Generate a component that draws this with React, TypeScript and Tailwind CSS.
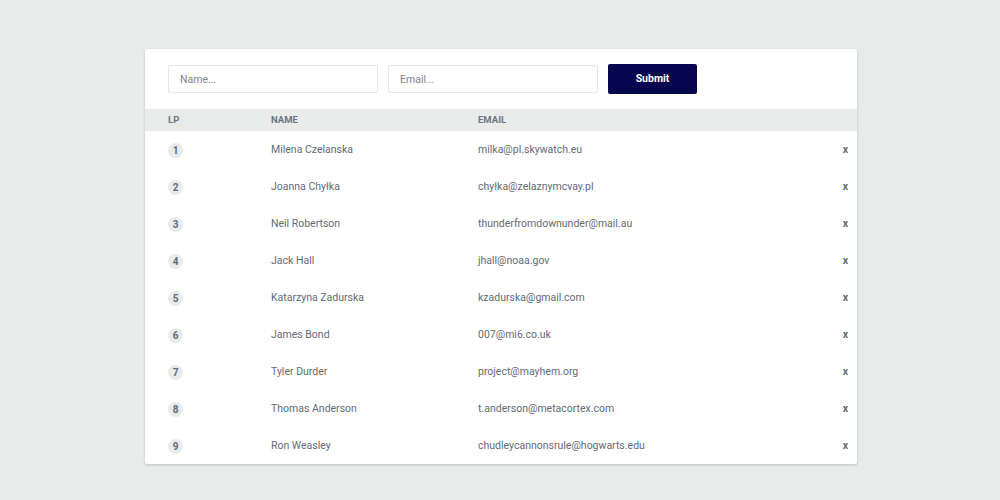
const people = [
  { name: 'Milena Czelanska', email: 'milka@pl.skywatch.eu' },
  { name: 'Joanna Chyłka', email: 'chyłka@zelaznymcvay.pl' },
  { name: 'Neil Robertson', email: 'thunderfromdownunder@mail.au' },
  { name: 'Jack Hall', email: 'jhall@noaa.gov' },
  { name: 'Katarzyna Zadurska', email: 'kzadurska@gmail.com' },
  { name: 'James Bond', email: '007@mi6.co.uk' },
  { name: 'Tyler Durder', email: 'project@mayhem.org' },
  { name: 'Thomas Anderson', email: 't.anderson@metacortex.com' },
  { name: 'Ron Weasley', email: 'chudleycannonsrule@hogwarts.edu' },
]

export default function App() {
  return (
    <div className="min-h-[500px] bg-[#e8ebea] pt-[49px] font-['Roboto',sans-serif]">
      <div className="ml-[145px] w-[712px] rounded-[2px] bg-white shadow-[0_1px_3px_rgba(0,0,0,0.18)]">
        <form className="flex items-center gap-[10px] px-[23px] pt-[15px] pb-[15px]" onSubmit={e => e.preventDefault()}>
          <input
            placeholder="Name..."
            className="h-[28px] w-[210px] rounded-[2px] border border-[#e4e7e6] px-[11px] text-[10.5px] text-[#5f6b76] placeholder:text-[#7b858e] outline-none"
          />
          <input
            placeholder="Email..."
            className="h-[28px] w-[210px] rounded-[2px] border border-[#e4e7e6] px-[11px] text-[10.5px] text-[#5f6b76] placeholder:text-[#7b858e] outline-none"
          />
          <button className="h-[30px] w-[89px] rounded-[2px] bg-[#07074f] text-[10.5px] font-bold text-white">
            Submit
          </button>
        </form>

        <div className="flex h-[22px] items-center bg-[#e8ebea] px-[23px] text-[9.5px] font-bold text-[#6b7682]">
          <div className="w-[103px]">LP</div>
          <div className="w-[207px]">NAME</div>
          <div>EMAIL</div>
        </div>

        {people.map((p, i) => (
          <div key={p.email} className="flex h-[37px] items-center pt-[1px] pl-[23px] pr-[9px] text-[10.5px] text-[#5f6b76]">
            <div className="w-[103px]">
              <span className="flex h-[15px] w-[15px] items-center justify-center rounded-full bg-[#e8ebea] text-[10px] font-bold text-[#5f6b76]">
                {i + 1}
              </span>
            </div>
            <div className="w-[207px]">{p.name}</div>
            <div className="flex-1">{p.email}</div>
            <button className="text-[10.5px] font-bold text-[#5f6b76]">x</button>
          </div>
        ))}
      </div>
    </div>
  )
}
